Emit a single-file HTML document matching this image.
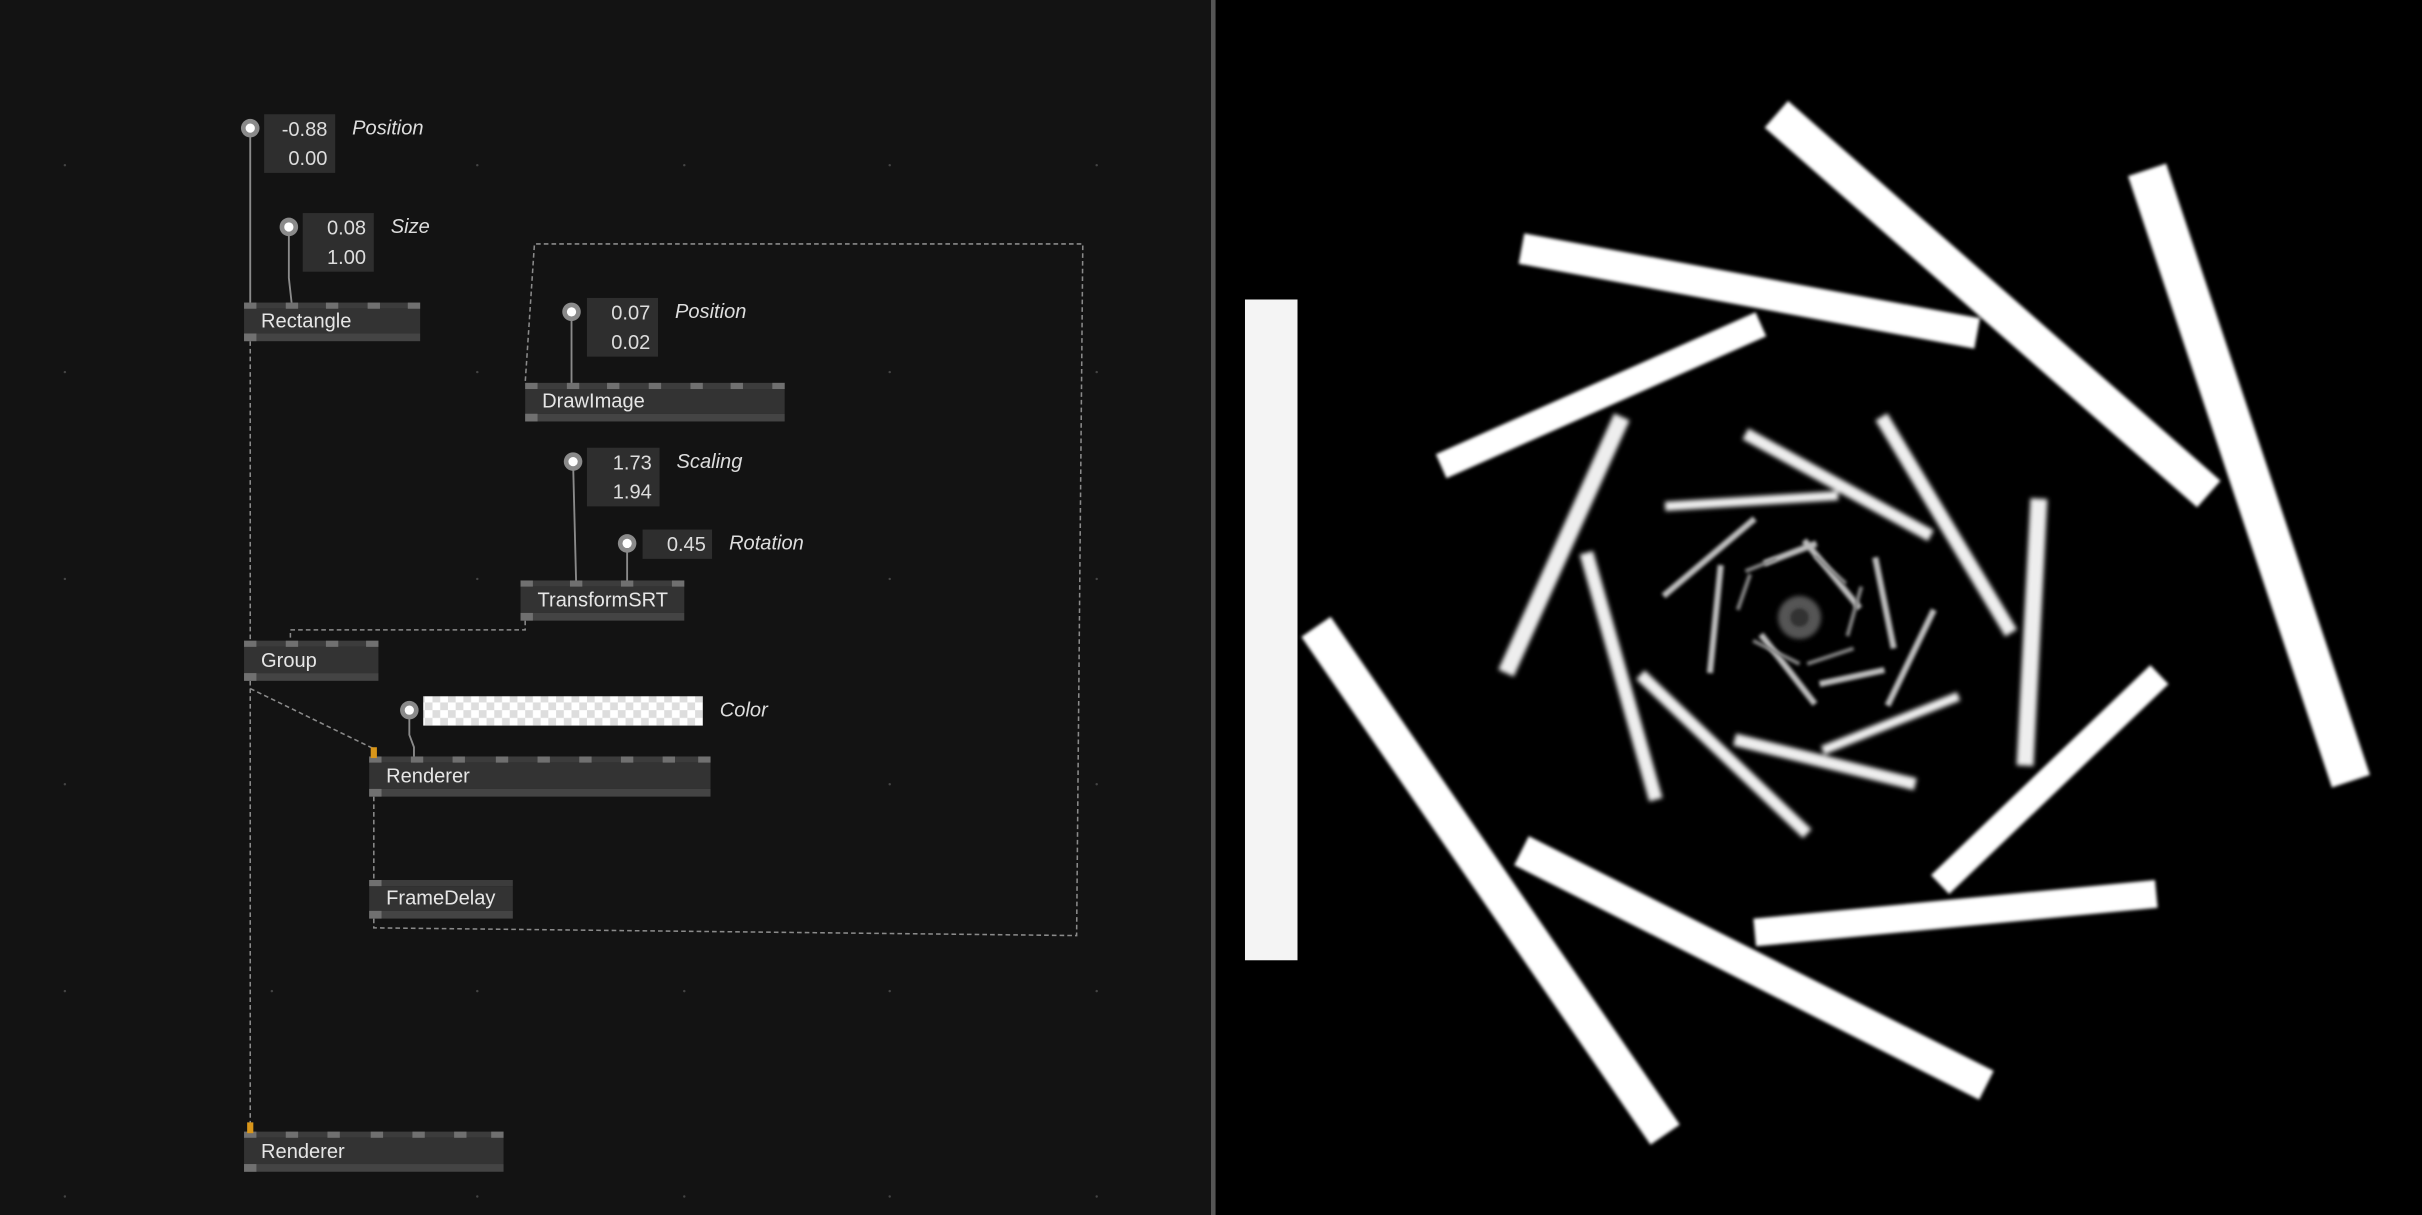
<!DOCTYPE html>
<html><head><meta charset="utf-8"><style>
html,body{margin:0;padding:0;background:#131313;overflow:hidden}
svg{display:block}
text{font-family:"Liberation Sans",sans-serif}
</style></head><body>
<svg width="2422" height="1215" viewBox="0 0 1568 787" preserveAspectRatio="none" xmlns="http://www.w3.org/2000/svg">
<defs>
<pattern id="chk" width="10" height="10" patternUnits="userSpaceOnUse">
<rect width="10" height="10" fill="#fff"/><rect width="5" height="5" fill="#ddd"/><rect x="5" y="5" width="5" height="5" fill="#ddd"/>
</pattern>
<filter id="bl" x="-20%" y="-20%" width="140%" height="140%"><feGaussianBlur stdDeviation="1"/></filter>
<filter id="bl2" x="-20%" y="-20%" width="140%" height="140%"><feGaussianBlur stdDeviation="1.6"/></filter>
</defs>
<rect width="787" height="787" fill="#131313"/>
<g fill="#444">
<circle cx="42" cy="107" r=".8"/><circle cx="176" cy="107" r=".8"/><circle cx="309" cy="107" r=".8"/><circle cx="443" cy="107" r=".8"/><circle cx="576" cy="107" r=".8"/><circle cx="710" cy="107" r=".8"/>
<circle cx="42" cy="241" r=".8"/><circle cx="309" cy="241" r=".8"/><circle cx="576" cy="241" r=".8"/><circle cx="710" cy="241" r=".8"/>
<circle cx="42" cy="375" r=".8"/><circle cx="309" cy="375" r=".8"/><circle cx="576" cy="375" r=".8"/><circle cx="710" cy="375" r=".8"/>
<circle cx="42" cy="508" r=".8"/><circle cx="576" cy="508" r=".8"/><circle cx="710" cy="508" r=".8"/>
<circle cx="42" cy="642" r=".8"/><circle cx="176" cy="642" r=".8"/><circle cx="309" cy="642" r=".8"/><circle cx="443" cy="642" r=".8"/><circle cx="576" cy="642" r=".8"/><circle cx="710" cy="642" r=".8"/>
<circle cx="42" cy="775" r=".8"/><circle cx="309" cy="775" r=".8"/><circle cx="443" cy="775" r=".8"/><circle cx="576" cy="775" r=".8"/><circle cx="710" cy="775" r=".8"/>
</g>
<!-- dashed wires -->
<g stroke="#8a8a8a" stroke-width="1" fill="none" stroke-dasharray="3,2">
<path d="M162 221 V415"/>
<path d="M340 402 V408 H188 V415"/>
<path d="M162 446 L242 485"/>
<path d="M162 441 V733"/>
<path d="M242 516 V570"/>
<path d="M242 595 V601 L697 606 L701 158 H346 L340 248"/>
</g>
<!-- solid wires -->
<g stroke="#8a8a8a" stroke-width="1.2" fill="none">
<path d="M162 83 V198"/>
<path d="M187 147 V180 L189 198"/>
<path d="M370 202 V250"/>
<path d="M371 299 L373 378"/>
<path d="M406 352 V378"/>
<path d="M265 460 V476 L268 484 V492"/>
</g>
<!-- value boxes -->
<g fill="#2e2e2e">
<rect x="171" y="74" width="46" height="38"/>
<rect x="196" y="138" width="46" height="38"/>
<rect x="380" y="193" width="46" height="38"/>
<rect x="380" y="290" width="47" height="38"/>
<rect x="416" y="343" width="45" height="19"/>
</g>
<rect x="274" y="451" width="181" height="19" fill="url(#chk)"/>
<g fill="#ddd" font-size="13" text-anchor="end">
<text x="212" y="88">-0.88</text><text x="212" y="107">0.00</text>
<text x="237" y="152">0.08</text><text x="237" y="171">1.00</text>
<text x="421" y="207">0.07</text><text x="421" y="226">0.02</text>
<text x="422" y="304">1.73</text><text x="422" y="323">1.94</text>
<text x="457" y="357">0.45</text>
</g>
<g fill="#ddd" font-size="13" font-style="italic">
<text x="228" y="87">Position</text>
<text x="253" y="151">Size</text>
<text x="437" y="206">Position</text>
<text x="438" y="303">Scaling</text>
<text x="472" y="356">Rotation</text>
<text x="466" y="464">Color</text>
</g>
<!-- pins -->
<g>
<g fill="#8a8a8a"><circle cx="162" cy="83" r="6"/><circle cx="187" cy="147" r="6"/><circle cx="370" cy="202" r="6"/><circle cx="371" cy="299" r="6"/><circle cx="406" cy="352" r="6"/><circle cx="265" cy="460" r="6"/></g>
<g fill="#fff"><circle cx="162" cy="83" r="3"/><circle cx="187" cy="147" r="3"/><circle cx="370" cy="202" r="3"/><circle cx="371" cy="299" r="3"/><circle cx="406" cy="352" r="3"/><circle cx="265" cy="460" r="3"/></g>
</g>
<!-- nodes -->
<g font-size="13" fill="#e6e6e6">
<g transform="translate(158,196)">
<rect width="114" height="4" fill="#3c3c3c"/><rect width="114" height="16" y="4" fill="#333"/><rect y="20" width="114" height="5" fill="#444"/>
<g fill="#707070"><rect x="0" width="8" height="4"/><rect x="27" width="8" height="4"/><rect x="53" width="8" height="4"/><rect x="80" width="8" height="4"/><rect x="106" width="8" height="4"/><rect y="20" width="8" height="5"/></g>
<text x="11" y="16">Rectangle</text></g>
<g transform="translate(340,248)">
<rect width="168" height="4" fill="#3c3c3c"/><rect width="168" height="16" y="4" fill="#333"/><rect y="20" width="168" height="5" fill="#444"/>
<g fill="#707070"><rect x="0" width="8" height="4"/><rect x="27" width="8" height="4"/><rect x="53" width="8" height="4"/><rect x="80" width="8" height="4"/><rect x="107" width="8" height="4"/><rect x="133" width="8" height="4"/><rect x="160" width="8" height="4"/><rect y="20" width="8" height="5"/></g>
<text x="11" y="16">DrawImage</text></g>
<g transform="translate(337,376)">
<rect width="106" height="4" fill="#3c3c3c"/><rect width="106" height="17" y="4" fill="#333"/><rect y="21" width="106" height="5" fill="#444"/>
<g fill="#707070"><rect x="0" width="8" height="4"/><rect x="32" width="8" height="4"/><rect x="65" width="8" height="4"/><rect x="98" width="8" height="4"/><rect y="21" width="8" height="5"/></g>
<text x="11" y="17">TransformSRT</text></g>
<g transform="translate(158,415)">
<rect width="87" height="4" fill="#3c3c3c"/><rect width="87" height="17" y="4" fill="#333"/><rect y="21" width="87" height="5" fill="#444"/>
<g fill="#707070"><rect x="0" width="8" height="4"/><rect x="27" width="8" height="4"/><rect x="53" width="8" height="4"/><rect x="79" width="8" height="4"/><rect y="21" width="8" height="5"/></g>
<text x="11" y="17">Group</text></g>
<g transform="translate(239,490)">
<rect width="221" height="4" fill="#3c3c3c"/><rect width="221" height="17" y="4" fill="#333"/><rect y="21" width="221" height="5" fill="#444"/>
<g fill="#707070"><rect x="0" width="8" height="4"/><rect x="27" width="8" height="4"/><rect x="54" width="8" height="4"/><rect x="82" width="8" height="4"/><rect x="109" width="8" height="4"/><rect x="136" width="8" height="4"/><rect x="163" width="8" height="4"/><rect x="190" width="8" height="4"/><rect x="213" width="8" height="4"/><rect y="21" width="8" height="5"/></g>
<text x="11" y="17">Renderer</text></g>
<rect x="240" y="484" width="4" height="7" fill="#d9961a"/>
<g transform="translate(239,570)">
<rect width="93" height="4" fill="#3c3c3c"/><rect width="93" height="16" y="4" fill="#333"/><rect y="20" width="93" height="5" fill="#444"/>
<g fill="#707070"><rect x="0" width="8" height="4"/><rect y="20" width="8" height="5"/></g>
<text x="11" y="16">FrameDelay</text></g>
<g transform="translate(158,733)">
<rect width="168" height="4" fill="#3c3c3c"/><rect width="168" height="17" y="4" fill="#333"/><rect y="21" width="168" height="5" fill="#444"/>
<g fill="#707070"><rect x="0" width="8" height="4"/><rect x="27" width="8" height="4"/><rect x="54" width="8" height="4"/><rect x="82" width="8" height="4"/><rect x="109" width="8" height="4"/><rect x="136" width="8" height="4"/><rect x="160" width="8" height="4"/><rect y="21" width="8" height="5"/></g>
<text x="11" y="17">Renderer</text></g>
<rect x="160" y="727" width="4" height="7" fill="#d9961a"/>
</g>
<!-- divider + right panel -->
<rect x="784" y="0" width="3" height="787" fill="#555"/>
<rect x="787" y="0" width="781" height="787" fill="#000"/>
<rect x="806" y="194" width="34" height="428" fill="#f4f4f4"/>
<g stroke="#fff" stroke-linecap="butt" filter="url(#bl)">
<line x1="1150" y1="74" x2="1430" y2="320" stroke-width="23"/>
<line x1="1390" y1="110" x2="1522" y2="506" stroke-width="26"/>
<line x1="985" y1="161" x2="1280" y2="216" stroke-width="20"/>
<line x1="933" y1="302" x2="1140" y2="210" stroke-width="17"/>
<line x1="852" y1="406" x2="1078" y2="735" stroke-width="23"/>
<line x1="985" y1="551" x2="1286" y2="703" stroke-width="21"/>
<line x1="1136" y1="604" x2="1396" y2="579" stroke-width="18"/>
<line x1="1256" y1="573" x2="1398" y2="437" stroke-width="17"/>
</g>
<g stroke="#eee" filter="url(#bl2)">
<line x1="1320" y1="323" x2="1311" y2="496" stroke-width="11"/>
<line x1="1218" y1="270" x2="1302" y2="410" stroke-width="9"/>
<line x1="1130" y1="281" x2="1250" y2="347" stroke-width="8"/>
<line x1="975" y1="436" x2="1050" y2="270" stroke-width="11"/>
<line x1="1027" y1="358" x2="1072" y2="518" stroke-width="9"/>
<line x1="1062" y1="437" x2="1170" y2="540" stroke-width="8"/>
<line x1="1123" y1="479" x2="1240" y2="508" stroke-width="8"/>
<line x1="1180" y1="486" x2="1268" y2="451" stroke-width="6"/>
<line x1="1078" y1="328" x2="1190" y2="321" stroke-width="6"/>
</g>
<g stroke="#bbb" stroke-width="4" filter="url(#bl)">
<line x1="1077" y1="386" x2="1136" y2="336" />
<line x1="1107" y1="436" x2="1114" y2="366"/>
<line x1="1140" y1="411" x2="1175" y2="456"/>
<line x1="1178" y1="443" x2="1220" y2="434"/>
<line x1="1222" y1="457" x2="1252" y2="395"/>
<line x1="1214" y1="361" x2="1226" y2="420"/>
<line x1="1142" y1="365" x2="1176" y2="352"/>
<line x1="1168" y1="350" x2="1204" y2="394"/>
</g>
<g stroke="#888" stroke-width="2.5" filter="url(#bl)">
<line x1="1130" y1="370" x2="1150" y2="362"/>
<line x1="1125" y1="395" x2="1133" y2="372"/>
<line x1="1135" y1="415" x2="1165" y2="430"/>
<line x1="1170" y1="430" x2="1200" y2="420"/>
<line x1="1196" y1="412" x2="1205" y2="380"/>
<line x1="1175" y1="360" x2="1195" y2="378"/>
</g>
<circle cx="1165" cy="400" r="14" fill="#555" filter="url(#bl2)"/>
<circle cx="1165" cy="400" r="6" fill="#333" filter="url(#bl)"/>
</svg>
</body></html>
